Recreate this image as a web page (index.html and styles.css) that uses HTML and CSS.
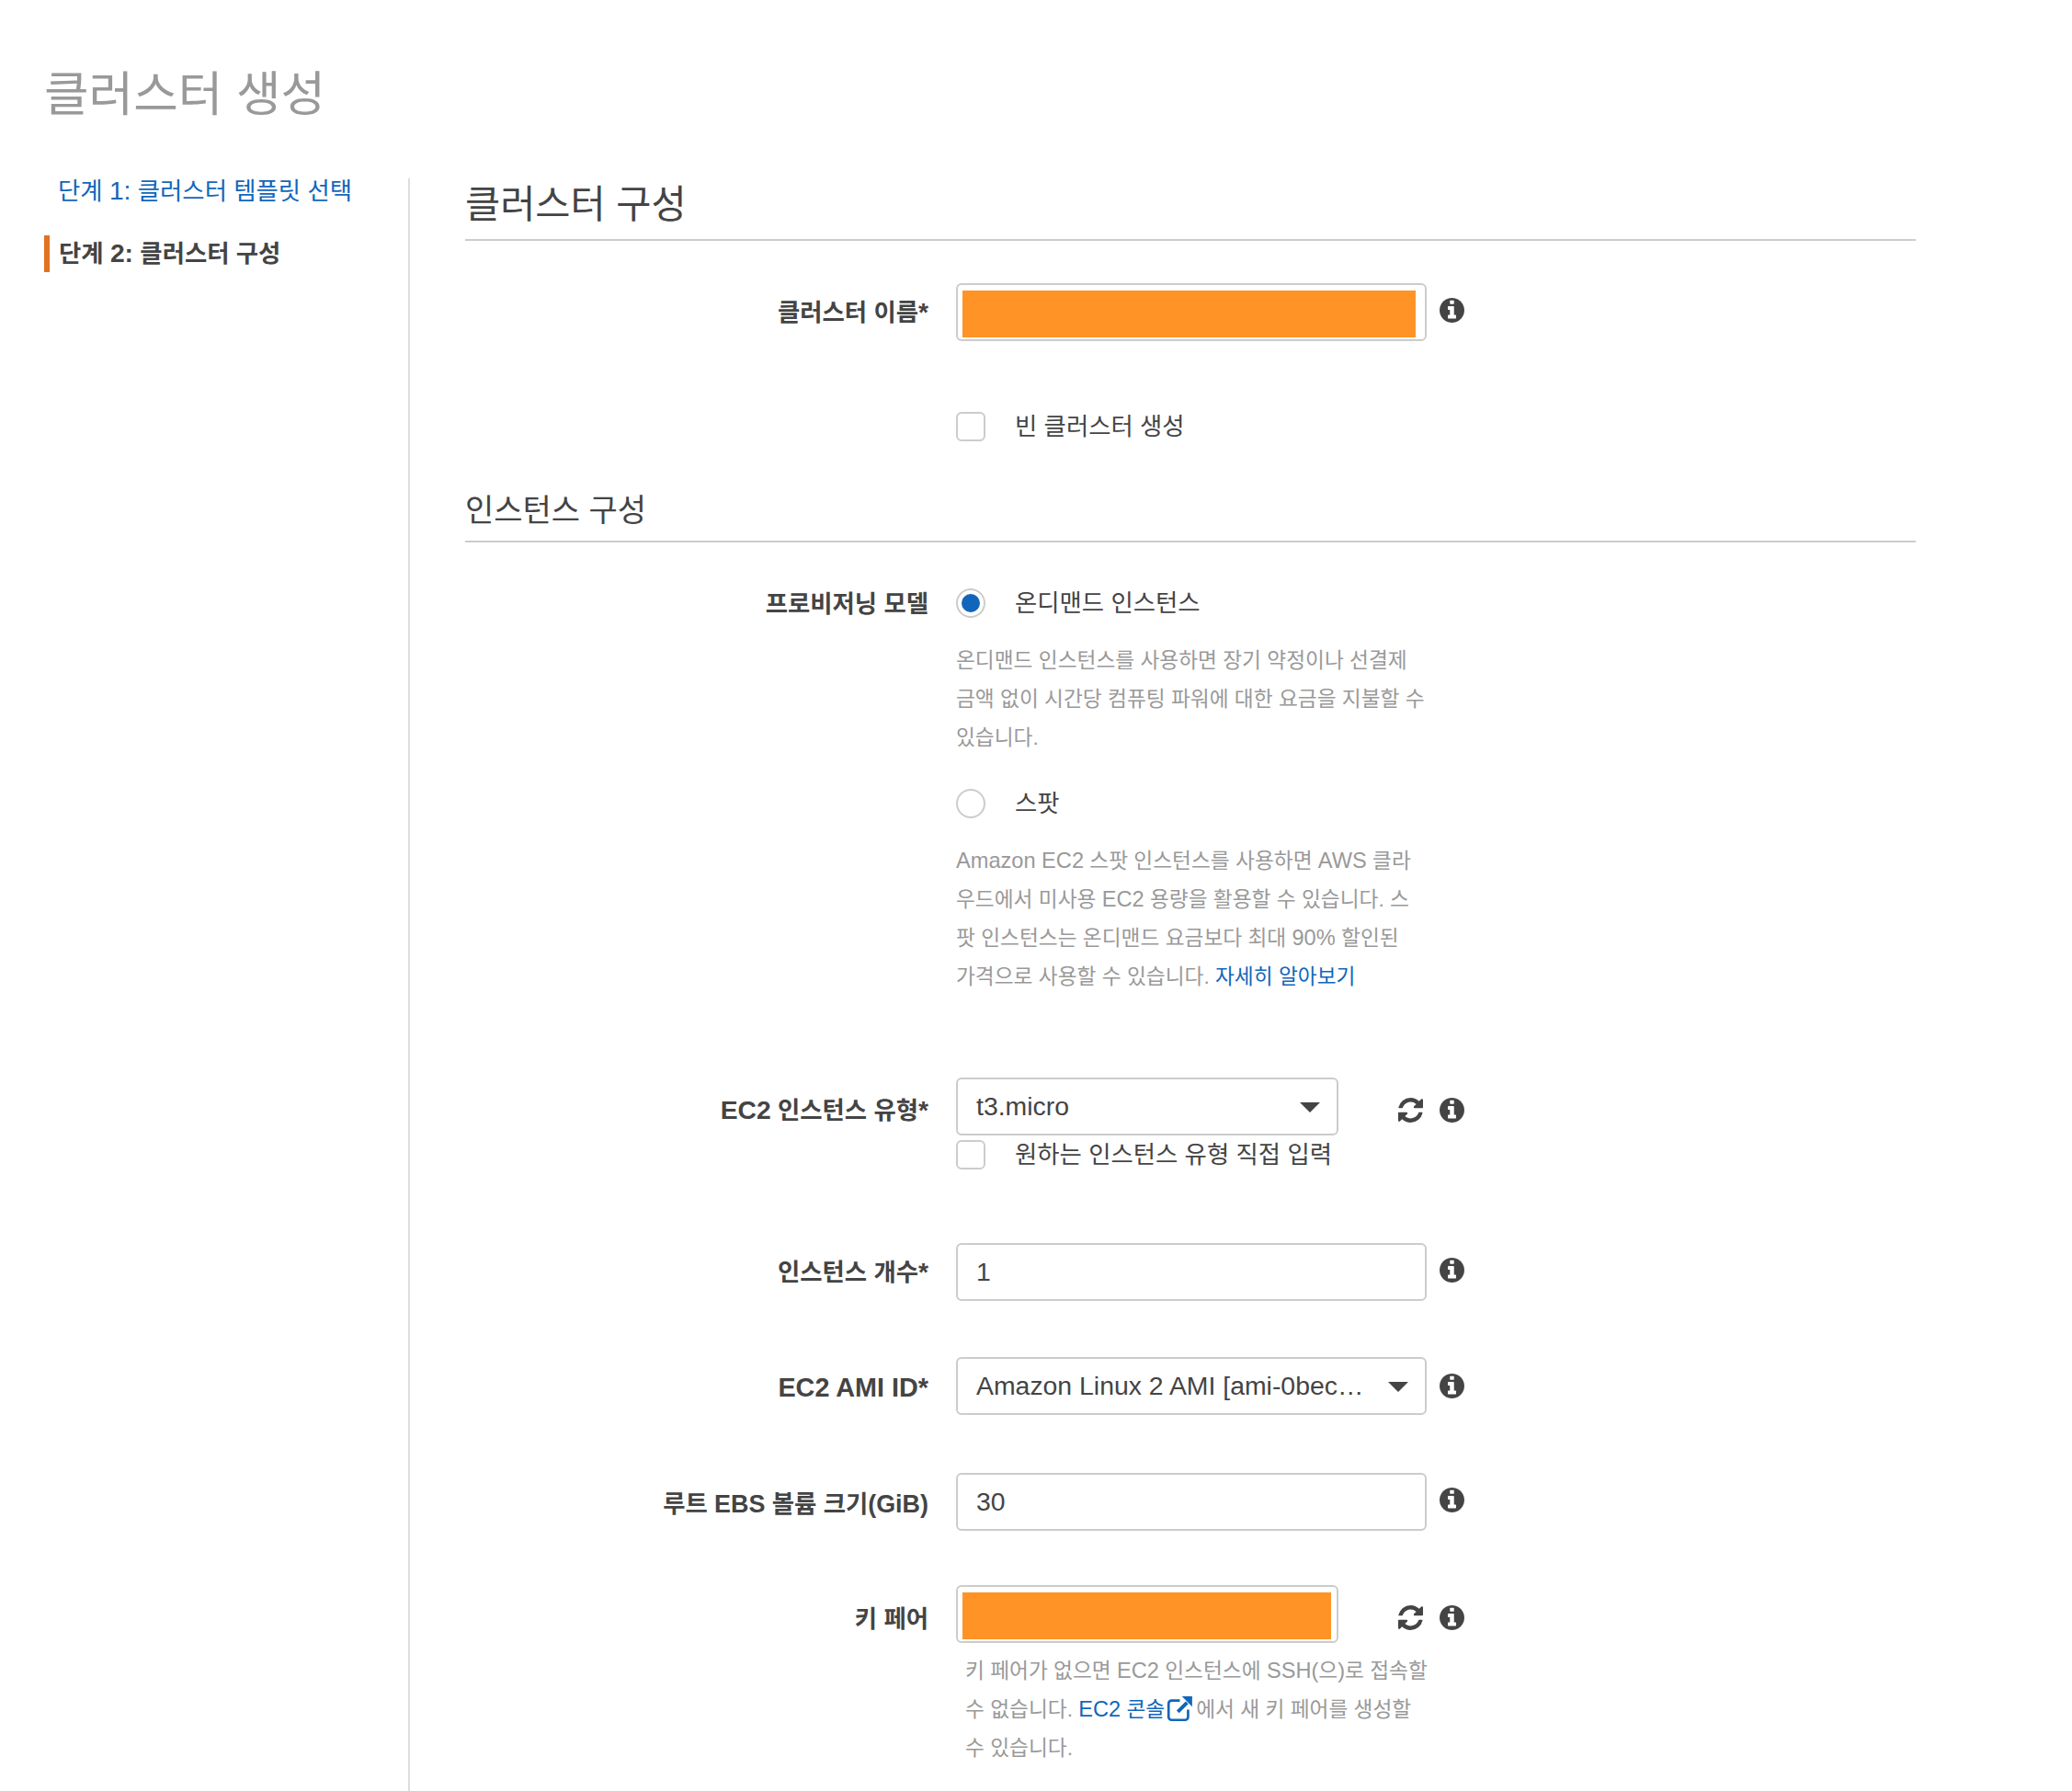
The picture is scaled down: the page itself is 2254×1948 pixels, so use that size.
FILE: index.html
```html
<!DOCTYPE html>
<html lang="ko">
<head>
    <meta charset="UTF-8">
    <title>클러스터 생성</title>
    <link rel="stylesheet" href="styles.css">
</head>
<body>
    <svg class="sprite" xmlns="http://www.w3.org/2000/svg">
        <symbol id="icon-info" viewBox="128 128 1536 1536">
            <path d="M1152 1376v-160q0-14-9-23t-23-9h-96v-512q0-14-9-23t-23-9h-320q-14 0-23 9t-9 23v160q0 14 9 23t23 9h96v320h-96q-14 0-23 9t-9 23v160q0 14 9 23t23 9h448q14 0 23-9t9-23zm-128-896v-160q0-14-9-23t-23-9h-192q-14 0-23 9t-9 23v160q0 14 9 23t23 9h192q14 0 23-9t9-23zm640 416q0 209-103 385.5t-279.5 279.5-385.5 103-385.5-103-279.5-279.5-103-385.5 103-385.5 279.5-279.5 385.5-103 385.5 103 279.5 279.5 103 385.5z"/>
        </symbol>
        <symbol id="icon-refresh" viewBox="128 128 1536 1536">
            <path d="M1639 1056q0 5-1 7-64 268-268 434.5t-478 166.5q-146 0-282.5-55t-243.5-157l-129 129q-19 19-45 19t-45-19-19-45v-448q0-26 19-45t45-19h448q26 0 45 19t19 45-19 45l-137 137q71 66 161 102t187 36q134 0 250-65t186-179q11-17 53-117 8-23 30-23h192q13 0 22.5 9.5t9.5 22.5zm25-800v448q0 26-19 45t-45 19h-448q-26 0-45-19t-19-45 19-45l138-138q-148-137-349-137-134 0-250 65t-186 179q-11 17-53 117-8 23-30 23h-199q-13 0-22.5-9.5t-9.5-22.5v-7q65-268 270-434.5t480-166.5q146 0 284 55.5t245 156.5l130-129q19-19 45-19t45 19 19 45z"/>
        </symbol>
    </svg>

    <h1 class="page-title">클러스터 생성</h1>

    <div class="wizard">
        <nav class="steps">
            <a class="step step-link" href="#">단계 <span class="en">1:</span> 클러스터 템플릿 선택</a>
            <div class="step step-current">단계 <span class="en">2:</span> 클러스터 구성</div>
        </nav>

        <main class="content">
            <h2 class="section-title">클러스터 구성</h2>

            <div class="row row-name">
                <label class="row-label">클러스터 이름<span class="en">*</span></label>
                <div class="row-field">
                    <div class="control control-masked"><div class="mask"></div></div>
                    <div class="actions">
                        <svg class="icon"><use href="#icon-info"/></svg>
                    </div>
                </div>
            </div>

            <div class="row row-empty">
                <div class="row-label"></div>
                <div class="choice">
                    <span class="checkbox"></span>
                    <span class="choice-text">빈 클러스터 생성</span>
                </div>
            </div>

            <h3 class="sub-title">인스턴스 구성</h3>

            <div class="row row-model">
                <label class="row-label">프로비저닝 모델</label>
                <div class="radio-group">
                    <div class="choice">
                        <span class="radio radio-on"></span>
                        <span class="choice-text">온디맨드 인스턴스</span>
                    </div>
                    <p class="hint">온디맨드 인스턴스를 사용하면 장기 약정이나 선결제<br>금액 없이 시간당 컴퓨팅 파워에 대한 요금을 지불할 수<br>있습니다.</p>
                    <div class="choice choice-spot">
                        <span class="radio"></span>
                        <span class="choice-text">스팟</span>
                    </div>
                    <p class="hint"><span class="en">Amazon EC2</span> 스팟 인스턴스를 사용하면 <span class="en">AWS</span> 클라<br>우드에서 미사용 <span class="en">EC2</span> 용량을 활용할 수 있습니다. 스<br>팟 인스턴스는 온디맨드 요금보다 최대 <span class="en">90%</span> 할인된<br>가격으로 사용할 수 있습니다. <a href="#">자세히 알아보기</a></p>
                </div>
            </div>

            <div class="row row-type">
                <label class="row-label"><span class="en">EC2</span> 인스턴스 유형<span class="en">*</span></label>
                <div class="row-stack">
                    <div class="row-field">
                        <div class="control control-narrow control-select">t3.micro<span class="caret"></span></div>
                        <div class="actions actions-low">
                            <svg class="icon"><use href="#icon-refresh"/></svg>
                            <svg class="icon"><use href="#icon-info"/></svg>
                        </div>
                    </div>
                    <div class="choice choice-tight">
                        <span class="checkbox"></span>
                        <span class="choice-text">원하는 인스턴스 유형 직접 입력</span>
                    </div>
                </div>
            </div>

            <div class="row row-count">
                <label class="row-label">인스턴스 개수<span class="en">*</span></label>
                <div class="row-field">
                    <div class="control">1</div>
                    <div class="actions">
                        <svg class="icon"><use href="#icon-info"/></svg>
                    </div>
                </div>
            </div>

            <div class="row row-ami">
                <label class="row-label"><span class="en">EC2 AMI ID*</span></label>
                <div class="row-field">
                    <div class="control control-select">Amazon Linux 2 AMI [ami-0bec…<span class="caret"></span></div>
                    <div class="actions actions-mid">
                        <svg class="icon"><use href="#icon-info"/></svg>
                    </div>
                </div>
            </div>

            <div class="row row-ebs">
                <label class="row-label">루트 <span class="en">EBS</span> 볼륨 크기<span class="en">(GiB)</span></label>
                <div class="row-field">
                    <div class="control">30</div>
                    <div class="actions">
                        <svg class="icon"><use href="#icon-info"/></svg>
                    </div>
                </div>
            </div>

            <div class="row row-key">
                <label class="row-label">키 페어</label>
                <div class="row-stack">
                    <div class="row-field">
                        <div class="control control-narrow control-masked"><div class="mask"></div></div>
                        <div class="actions actions-low">
                            <svg class="icon"><use href="#icon-refresh"/></svg>
                            <svg class="icon"><use href="#icon-info"/></svg>
                        </div>
                    </div>
                    <p class="hint hint-key">키 페어가 없으면 <span class="en">EC2</span> 인스턴스에 <span class="en">SSH(</span>으<span class="en">)</span>로 접속할<br>수 없습니다. <a href="#"><span class="en">EC2</span> 콘솔<svg class="external" viewBox="0 0 26 26"><path d="M13 5H5a3 3 0 0 0-3 3v13a3 3 0 0 0 3 3h13a3 3 0 0 0 3-3v-7" fill="none" stroke="currentColor" stroke-width="2.4"/><path d="M11 16 20 7" fill="none" stroke="currentColor" stroke-width="3.6"/><path d="M15 1h10v10z" fill="currentColor"/></svg></a>에서 새 키 페어를 생성할<br>수 있습니다.</p>
                </div>
            </div>
        </main>
    </div>
</body>
</html>
```

FILE: styles.css
```css
* {
    box-sizing: border-box;
}

html, body {
    height: 1948px;
    overflow: hidden;
}

body {
    margin: 0;
    padding: 0 0 0 48px;
    background-color: #ffffff;
    color: #444444;
    font-family: "Liberation Sans", "Noto Sans CJK KR", sans-serif;
    font-size: 26.4px;
}

a {
    color: #1166bb;
    text-decoration: none;
}

.sprite {
    display: none;
}

/* latin runs sit a bit larger than the hangul around them */
.en {
    font-size: 1.07em;
    line-height: 0;
}

.page-title {
    margin: 0;
    padding-top: 67px;
    height: 194px;
    font-size: 52.8px;
    line-height: 72px;
    font-weight: 400;
    color: #999999;
}

.wizard {
    display: flex;
    height: 1754px;
}

/* sidebar */
.steps {
    width: 398px;
    border-right: 2px solid #dddddd;
    flex-shrink: 0;
    height: 100%;
    display: flex;
    flex-direction: column;
    gap: 28px;
}

.step {
    display: block;
    height: 40px;
    line-height: 40px;
    padding-left: 15px;
}

.step:first-child {
    margin-top: -6px;
}

.step-current {
    border-left: 6px solid #e07222;
    padding-left: 10px;
    font-weight: 700;
    color: #444444;
}

/* main */
.content {
    width: 1578px;
    margin-left: 60px;
}

.section-title {
    margin: 0;
    padding-top: 3px;
    height: 68px;
    border-bottom: 2px solid #cccccc;
    font-size: 41.5px;
    line-height: 52px;
    font-weight: 400;
}

.sub-title {
    margin: 56px 0 0;
    height: 54px;
    border-bottom: 2px solid #cccccc;
    font-size: 34px;
    line-height: 38px;
    font-weight: 400;
}

.row {
    display: flex;
    align-items: flex-start;
}

.row-label {
    width: 504px;
    height: 63px;
    flex-shrink: 0;
    margin-right: 30px;
    text-align: right;
    font-weight: 700;
    line-height: 64px;
}

.row-field {
    display: flex;
    width: 553px;
    align-items: flex-start;
}

.row-stack {
    display: flex;
    flex-direction: column;
}

.control {
    width: 512px;
    height: 63px;
    border: 2px solid #cccccc;
    border-radius: 6px;
    padding: 0 20px;
    font-size: 28.4px;
    line-height: 59px;
    position: relative;
    white-space: nowrap;
}

.control-narrow {
    width: 416px;
}

.control-masked {
    padding: 6px 10px 2px 5px;
}

.control-narrow.control-masked {
    padding-right: 6px;
}

.mask {
    height: 100%;
    background-color: #ff9326;
}

.caret {
    position: absolute;
    right: 18px;
    top: 25px;
    width: 0;
    height: 0;
    border-left: 11px solid transparent;
    border-right: 11px solid transparent;
    border-top: 11px solid #444444;
}

.actions {
    display: flex;
    gap: 18px;
    margin-left: auto;
    padding-top: 16px;
}

.actions-mid {
    padding-top: 18px;
}

.actions-low {
    padding-top: 22px;
}

.icon {
    width: 27px;
    height: 27px;
    fill: #444444;
}

.choice {
    display: flex;
    align-items: center;
    height: 32px;
}

.checkbox, .radio {
    width: 32px;
    height: 32px;
    flex-shrink: 0;
    margin-right: 32px;
    border: 2px solid #cccccc;
    background-color: #ffffff;
}

.checkbox {
    border-radius: 6px;
}

.radio {
    border-radius: 50%;
}

.radio-on {
    padding: 4px;
}

.radio-on::before {
    content: "";
    display: block;
    width: 100%;
    height: 100%;
    border-radius: 50%;
    background-color: #1166bb;
}

.choice-text {
    line-height: 32px;
}

.hint {
    margin: 0;
    width: 512px;
    font-size: 22.7px;
    line-height: 42px;
    color: #999999;
    white-space: nowrap;
}

.hint .en {
    font-size: 1.04em;
}

.external {
    width: 29px;
    height: 29px;
    vertical-align: -6px;
    margin: 0 3px 0 2px;
}

/* vertical rhythm of the form */
.row-name {
    margin-top: 46px;
}

.row-empty {
    margin-top: 77px;
}

.row-empty .row-label {
    height: 32px;
    line-height: 32px;
}

.row-model {
    margin-top: 50px;
}

.row-model .row-label {
    height: 32px;
    line-height: 34px;
}

.radio-group .hint {
    margin-top: 25px;
}

.choice-spot {
    margin-top: 35px;
}

.row-type {
    margin-top: 89px;
}

.row-type .row-label {
    padding-top: 4px;
}

.choice-tight {
    margin-top: 5px;
}

.row-count {
    margin-top: 80px;
}

.row-ami {
    margin-top: 61px;
}

.row-ami .row-label {
    padding-top: 2px;
}

.row-ami .en {
    font-size: 1.09em;
}

.row-ebs {
    margin-top: 63px;
}

.row-ebs .row-label {
    padding-top: 2px;
}

.row-ebs .en {
    font-size: 1.02em;
}

.row-key {
    margin-top: 59px;
}

.row-key .row-label {
    padding-top: 5px;
}

.hint-key {
    margin-top: 9px;
    padding-left: 10px;
}
```
